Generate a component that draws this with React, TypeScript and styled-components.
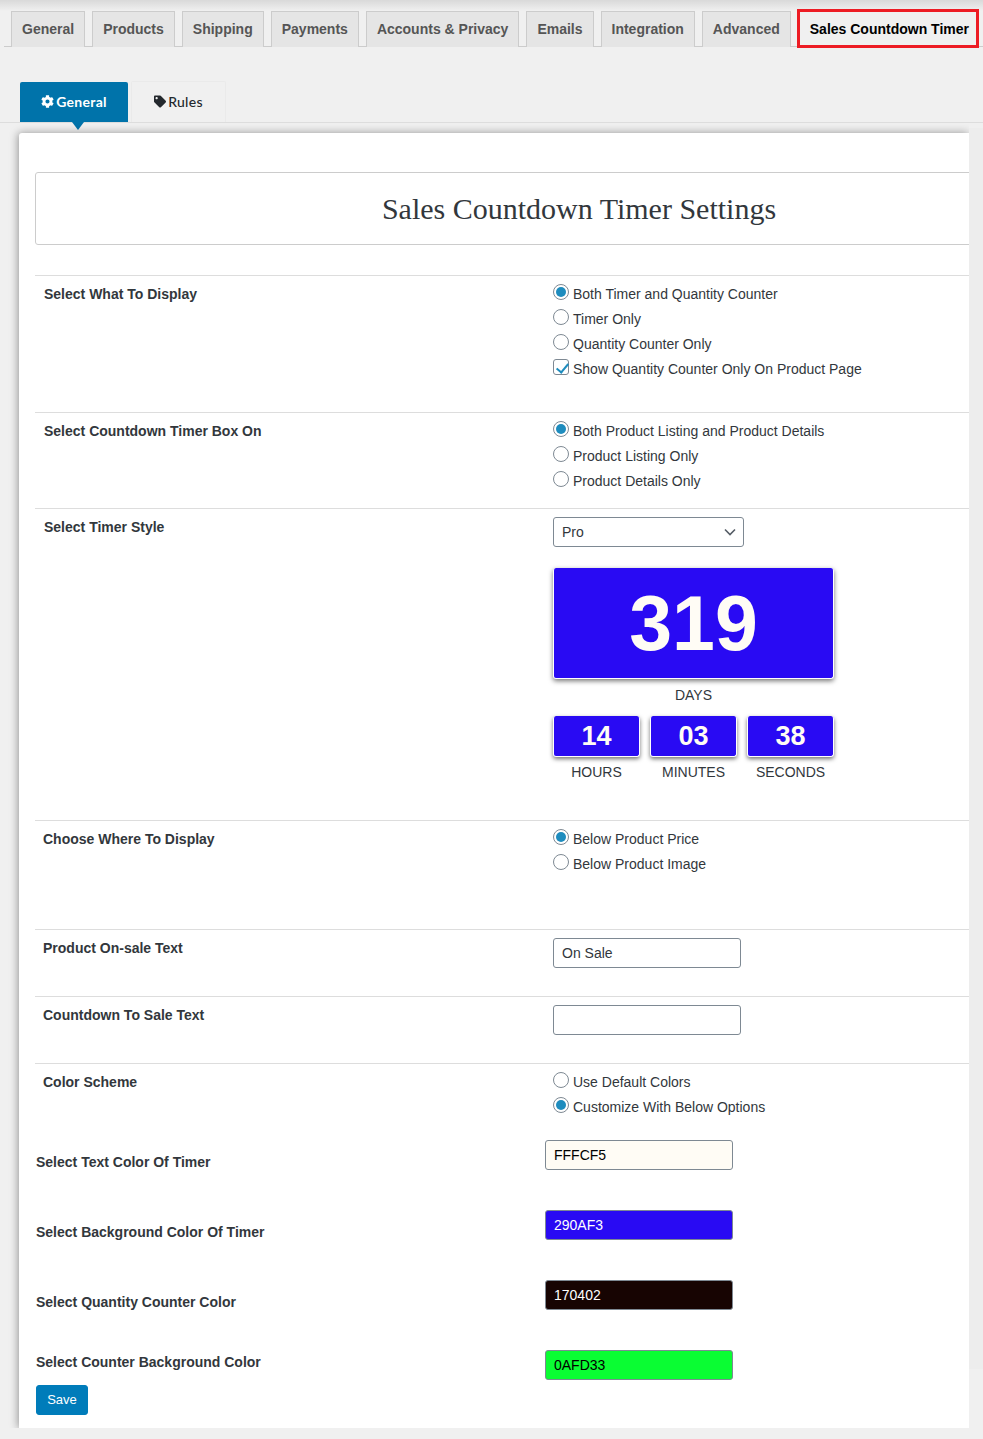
import React from "react";
import styled, { createGlobalStyle } from "styled-components";
import { FaCog, FaTag } from "react-icons/fa";

const Global = createGlobalStyle`
  html, body { margin: 0; padding: 0; background: #f0f0f0; }
  body { font-family: "Liberation Sans", Arial, sans-serif; font-size: 14px; color: #32373c; overflow: hidden; }
  * { box-sizing: border-box; }
`;

const Page = styled.div`
  position: relative;
  width: 983px;
  height: 1439px;
  overflow: hidden;
  background: linear-gradient(#d9d9d9 0, #f0f0f0 11px);
  &::after {
    content: "";
    position: absolute;
    left: 969px;
    top: 128px;
    width: 14px;
    height: 1241px;
    background: #ededed;
  }
`;

const NavBar = styled.nav`
  display: flex;
  gap: 7px;
  height: 47px;
  margin-left: 4px;
  padding: 11px 0 0 7px;
  border-bottom: 1px solid #cccccc;
`;

const NavTab = styled.a`
  height: 36px;
  padding: 0 10px;
  border: 1px solid #cccccc;
  border-bottom: 0;
  background: #e5e5e5;
  color: #555555;
  font-weight: 700;
  font-size: 14px;
  line-height: 34px;
  white-space: nowrap;
`;

const ActiveNavTab = styled(NavTab)`
  width: 182px;
  height: 39px;
  margin: -2px 0 0 -1px;
  padding: 0 0 0 10px;
  border: 3px solid #ed1c24;
  background: #f0f0f0;
  color: #000000;
  line-height: 34px;
`;

const SubNav = styled.div`
  display: flex;
  align-items: flex-end;
  gap: 3px;
  height: 41px;
  margin: 35px 0 0 0;
  padding-left: 20px;
  border-bottom: 1px solid #dddddd;
`;

const SubTab = styled.a<{ $active?: boolean }>`
  position: relative;
  display: flex;
  align-items: center;
  justify-content: center;
  gap: 2px;
  width: ${(p) => (p.$active ? "108px" : "95px")};
  height: ${(p) => (p.$active ? "40px" : "41px")};
  padding-bottom: 2px;
  border: ${(p) => (p.$active ? "0" : "1px solid #eaeaea")};
  border-bottom: 0;
  border-radius: 2px 2px 0 0;
  background: ${(p) => (p.$active ? "#0073aa" : "#f0f0f0")};
  color: ${(p) => (p.$active ? "#ffffff" : "#23282d")};
  font-family: Lato, sans-serif;
  font-weight: ${(p) => (p.$active ? 700 : 500)};
  font-size: 14px;
  letter-spacing: 0.3px;
  svg { width: ${(p) => (p.$active ? "13px" : "12px")}; height: 13px; }
  ${(p) =>
    p.$active &&
    `&::after {
      content: "";
      position: absolute;
      left: 52px;
      top: 40px;
      border-left: 6px solid transparent;
      border-right: 6px solid transparent;
      border-top: 8px solid #0073aa;
    }`}
`;

const Panel = styled.main`
  width: 950px;
  height: 1295px;
  margin: 10px 0 0 19px;
  padding: 39px 0 0 16px;
  overflow: hidden;
  background: #ffffff;
  border-radius: 3px 0 0 0;
  box-shadow: -1px 0 9px rgba(0, 0, 0, 0.38);
  clip-path: inset(-14px 0 0 -14px);
`;

const TitleBox = styled.header`
  width: 1088px;
  height: 73px;
  margin-bottom: 30px;
  border: 1px solid #cccccc;
  border-radius: 3px;
  font-family: "Liberation Serif", "Times New Roman", serif;
  font-size: 30px;
  line-height: 72px;
  text-align: center;
  color: #32373c;
`;

const Row = styled.section<{ $pb: number; $inset?: number }>`
  display: grid;
  grid-template-columns: 509px 1fr;
  width: 1000px;
  padding: 5px 0 ${(p) => p.$pb}px ${(p) => p.$inset ?? 9}px;
  border-top: 1px solid #dddddd;
`;

const Label = styled.div`
  padding-top: 1px;
  font-weight: 700;
  font-size: 14px;
  line-height: 25px;
  color: #32373c;
`;

const Options = styled.div<{ $shift?: number }>`
  display: flex;
  flex-direction: column;
  margin-left: ${(p) => p.$shift ?? 0}px;
`;

const Option = styled.label`
  display: flex;
  align-items: center;
  gap: 4px;
  height: 25px;
  font-size: 14px;
  color: #32373c;
`;

const Radio = styled.input.attrs({ type: "radio" })`
  appearance: none;
  position: relative;
  width: 16px;
  height: 16px;
  margin: 0 0 3px;
  border: 1px solid #7e8993;
  border-radius: 50%;
  background: #ffffff;
  &:checked::before {
    content: "";
    position: absolute;
    inset: 2px;
    border-radius: 50%;
    background: #1e8cbe;
  }
`;

const Check = styled.input.attrs({ type: "checkbox" })`
  appearance: none;
  position: relative;
  width: 16px;
  height: 16px;
  margin: 0 0 3px;
  border: 1px solid #7e8993;
  border-radius: 3px;
  background: #ffffff;
  &:checked::before {
    content: "";
    position: absolute;
    left: 5px;
    top: 1px;
    width: 5px;
    height: 10px;
    border: solid #1e8cbe;
    border-width: 0 2px 2px 0;
    transform: rotate(40deg);
  }
`;

const SelectWrap = styled.div`
  position: relative;
  width: 191px;
  height: 30px;
  margin-top: 3px;
`;

const Select = styled.select`
  appearance: none;
  width: 100%;
  height: 100%;
  padding: 0 8px;
  border: 1px solid #7e8993;
  border-radius: 3px;
  background: #ffffff;
  color: #32373c;
  font: 14px "Liberation Sans", Arial, sans-serif;
`;

const Chevron = styled.svg`
  position: absolute;
  right: 8px;
  top: 11px;
  width: 12px;
  height: 8px;
  pointer-events: none;
`;

const Timer = styled.div`
  width: 281px;
  margin-top: 21px;
  text-align: center;
`;

const BigBox = styled.div`
  height: 111px;
  margin-bottom: -1px;
  border: 1px solid #ffffff;
  border-top: 0;
  border-radius: 3px;
  background: #290af3;
  color: #fffcf5;
  font-weight: 700;
  font-size: 77px;
  line-height: 110px;
  box-shadow: 0 2px 5px rgba(0, 0, 0, 0.55);
`;

const UnitLabel = styled.div<{ $tight?: boolean }>`
  height: 38px;
  font-size: 14px;
  line-height: ${(p) => (p.$tight ? 30 : 34)}px;
  color: #32373c;
`;

const SmallGrid = styled.div`
  display: grid;
  grid-template-columns: repeat(3, 87px);
  gap: 10px;
  width: 281px;
`;

const SmallBox = styled.div`
  height: 41px;
  border: 1px solid #ffffff;
  border-top: 0;
  border-radius: 3px;
  background: #290af3;
  color: #fffcf5;
  font-weight: 700;
  font-size: 27px;
  line-height: 40px;
  box-shadow: 0 2px 4px rgba(0, 0, 0, 0.55);
`;

const TextField = styled.input<{ $bg?: string; $fg?: string }>`
  display: block;
  width: 188px;
  height: 30px;
  padding: 0 8px;
  border: 1px solid #7e8993;
  border-radius: 3px;
  background: ${(p) => p.$bg ?? "#ffffff"};
  color: ${(p) => p.$fg ?? "#32373c"};
  font: 14px "Liberation Sans", Arial, sans-serif;
`;

const FieldSlot = styled.div`
  margin-left: 1px;
  padding-top: 3px;
`;

const ColorRow = styled.div<{ $labelTop: number; $height: number }>`
  display: grid;
  grid-template-columns: 509px 188px;
  height: ${(p) => p.$height}px;
  padding-left: 1px;
  ${Label} { padding-top: ${(p) => p.$labelTop}px; }
`;

const ColorList = styled.div`
  margin-top: -1px;
`;

const SaveButton = styled.button`
  display: block;
  width: 52px;
  height: 30px;
  margin-left: 1px;
  padding: 0 0 2px;
  border: 1px solid #007cba;
  border-radius: 3px;
  background: #007cba;
  color: #ffffff;
  font: 13px "Liberation Sans", Arial, sans-serif;
`;

const navTabs = ["General", "Products", "Shipping", "Payments", "Accounts & Privacy", "Emails", "Integration", "Advanced"];

const colorRows = [
  { label: "Select Text Color Of Timer", value: "FFFCF5", bg: "#fffcf5", fg: "#000000", top: 10, height: 70 },
  { label: "Select Background Color Of Timer", value: "290AF3", bg: "#290af3", fg: "#ffffff", top: 10, height: 70 },
  { label: "Select Quantity Counter Color", value: "170402", bg: "#170402", fg: "#ffffff", top: 10, height: 70 },
  { label: "Select Counter Background Color", value: "0AFD33", bg: "#0afd33", fg: "#000000", top: 0, height: 35 },
];

const units = [
  { value: "14", label: "HOURS" },
  { value: "03", label: "MINUTES" },
  { value: "38", label: "SECONDS" },
];

export default function App() {
  return (
    <Page>
      <Global />
      <NavBar>
        {navTabs.map((t) => (
          <NavTab key={t}>{t}</NavTab>
        ))}
        <ActiveNavTab>Sales Countdown Timer</ActiveNavTab>
      </NavBar>

      <SubNav>
        <SubTab $active>
          <FaCog />
          General
        </SubTab>
        <SubTab>
          <FaTag />
          Rules
        </SubTab>
      </SubNav>

      <Panel>
        <TitleBox>Sales Countdown Timer Settings</TitleBox>

        <Row $pb={31}>
          <Label>Select What To Display</Label>
          <Options>
            <Option><Radio name="display" defaultChecked />Both Timer and Quantity Counter</Option>
            <Option><Radio name="display" />Timer Only</Option>
            <Option><Radio name="display" />Quantity Counter Only</Option>
            <Option><Check defaultChecked />Show Quantity Counter Only On Product Page</Option>
          </Options>
        </Row>

        <Row $pb={15}>
          <Label>Select Countdown Timer Box On</Label>
          <Options>
            <Option><Radio name="box" defaultChecked />Both Product Listing and Product Details</Option>
            <Option><Radio name="box" />Product Listing Only</Option>
            <Option><Radio name="box" />Product Details Only</Option>
          </Options>
        </Row>

        <Row $pb={25}>
          <Label>Select Timer Style</Label>
          <div>
            <SelectWrap>
              <Select defaultValue="Pro">
                <option>Pro</option>
              </Select>
              <Chevron viewBox="0 0 12 8" fill="none" stroke="#555d66" strokeWidth="1.6">
                <path d="M1 1.5 6 6.5 11 1.5" />
              </Chevron>
            </SelectWrap>
            <Timer>
              <BigBox>319</BigBox>
              <UnitLabel>DAYS</UnitLabel>
              <SmallGrid>
                {units.map((u) => (
                  <div key={u.label}>
                    <SmallBox>{u.value}</SmallBox>
                    <UnitLabel $tight>{u.label}</UnitLabel>
                  </div>
                ))}
              </SmallGrid>
            </Timer>
          </div>
        </Row>

        <Row $pb={53} $inset={8}>
          <Label>Choose Where To Display</Label>
          <Options $shift={1}>
            <Option><Radio name="where" defaultChecked />Below Product Price</Option>
            <Option><Radio name="where" />Below Product Image</Option>
          </Options>
        </Row>

        <Row $pb={28} $inset={8}>
          <Label>Product On-sale Text</Label>
          <FieldSlot>
            <TextField defaultValue="On Sale" />
          </FieldSlot>
        </Row>

        <Row $pb={28} $inset={8}>
          <Label>Countdown To Sale Text</Label>
          <FieldSlot>
            <TextField defaultValue="" />
          </FieldSlot>
        </Row>

        <Row $pb={22} $inset={8}>
          <Label>Color Scheme</Label>
          <Options $shift={1}>
            <Option><Radio name="scheme" />Use Default Colors</Option>
            <Option><Radio name="scheme" defaultChecked />Customize With Below Options</Option>
          </Options>
        </Row>

        <ColorList>
          {colorRows.map((c) => (
            <ColorRow key={c.label} $labelTop={c.top} $height={c.height}>
              <Label>{c.label}</Label>
              <TextField defaultValue={c.value} $bg={c.bg} $fg={c.fg} />
            </ColorRow>
          ))}
        </ColorList>
        <SaveButton>Save</SaveButton>
      </Panel>
    </Page>
  );
}
